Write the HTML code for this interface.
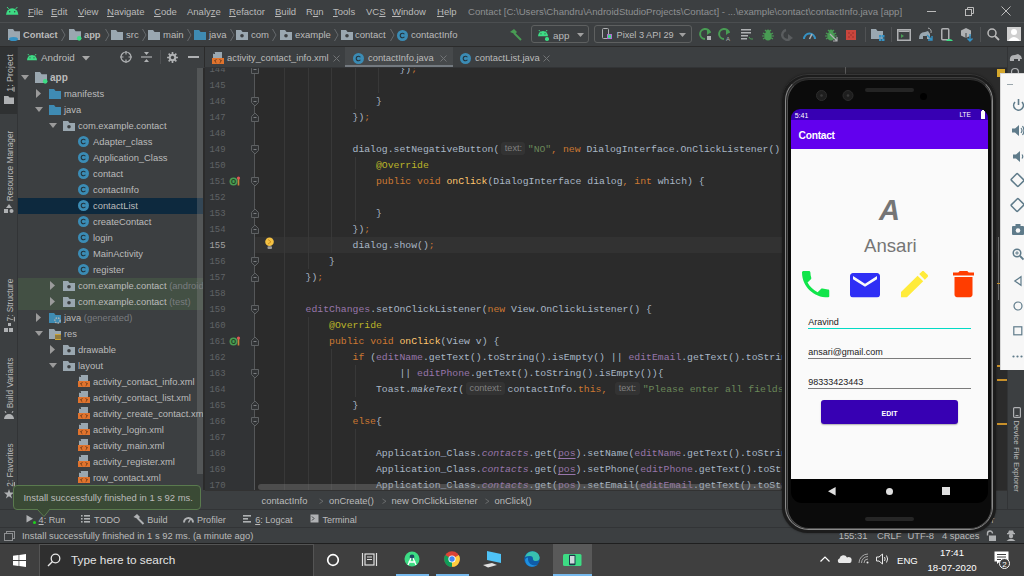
<!DOCTYPE html>
<html><head><meta charset="utf-8">
<style>
*{box-sizing:border-box}
html,body{margin:0;padding:0}
body{width:1024px;height:576px;overflow:hidden;position:relative;background:#3c3f41;font-family:"Liberation Sans",sans-serif;color:#bbbbbb;font-size:9.5px}
.a{position:absolute}
svg.a{overflow:visible}
.t{position:absolute;white-space:pre;line-height:1}
.m{position:absolute;white-space:pre;line-height:16px;font-family:"Liberation Mono",monospace;font-size:9.79px;color:#a9b7c6;height:16px}
u{text-decoration:underline;text-underline-offset:1px;text-decoration-thickness:1px}
</style></head><body>
<div class="a" style="left:0px;top:0px;width:1024px;height:22px;background:#3c3f41;"></div>
<div class="a" style="left:0px;top:22px;width:1024px;height:1px;background:#4b4e50;"></div>
<div class="a" style="left:0px;top:23px;width:1024px;height:23px;background:#3c3f41;"></div>
<div class="a" style="left:0px;top:46px;width:1024px;height:1px;background:#2b2b2b;"></div>
<svg class="a" style="left:6px;top:7.3px;" width="12.4" height="7.688" viewBox="0 0 12.4 7.688"><path d="M0 7.688 A6.2 6.448 0 0 1 12.4 7.688 Z" fill="#3ddc84"/><line x1="2.728" y1="1.922" x2="0.9920000000000001" y2="0" stroke="#3ddc84" stroke-width="1"/><line x1="9.672" y1="1.922" x2="11.408000000000001" y2="0" stroke="#3ddc84" stroke-width="1"/><circle cx="3.7199999999999998" cy="4.76656" r="0.744" fill="#3c3f41"/><circle cx="8.68" cy="4.76656" r="0.744" fill="#3c3f41"/></svg>
<div class="t" style="left:28.0px;top:7.4px;font-size:9.5px;color:#bbbbbb;"><u>F</u>ile</div>
<div class="t" style="left:51.0px;top:7.4px;font-size:9.5px;color:#bbbbbb;"><u>E</u>dit</div>
<div class="t" style="left:78.0px;top:7.4px;font-size:9.5px;color:#bbbbbb;"><u>V</u>iew</div>
<div class="t" style="left:107.0px;top:7.4px;font-size:9.5px;color:#bbbbbb;"><u>N</u>avigate</div>
<div class="t" style="left:154.0px;top:7.4px;font-size:9.5px;color:#bbbbbb;"><u>C</u>ode</div>
<div class="t" style="left:187.0px;top:7.4px;font-size:9.5px;color:#bbbbbb;">Analy<u>z</u>e</div>
<div class="t" style="left:229.0px;top:7.4px;font-size:9.5px;color:#bbbbbb;"><u>R</u>efactor</div>
<div class="t" style="left:275.0px;top:7.4px;font-size:9.5px;color:#bbbbbb;"><u>B</u>uild</div>
<div class="t" style="left:306.0px;top:7.4px;font-size:9.5px;color:#bbbbbb;">R<u>u</u>n</div>
<div class="t" style="left:333.0px;top:7.4px;font-size:9.5px;color:#bbbbbb;"><u>T</u>ools</div>
<div class="t" style="left:366.0px;top:7.4px;font-size:9.5px;color:#bbbbbb;">VC<u>S</u></div>
<div class="t" style="left:392.0px;top:7.4px;font-size:9.5px;color:#bbbbbb;"><u>W</u>indow</div>
<div class="t" style="left:437.0px;top:7.4px;font-size:9.5px;color:#bbbbbb;"><u>H</u>elp</div>
<div class="t" style="left:468.0px;top:7.3px;font-size:9.6px;color:#8e9092;">Contact [C:\Users\Chandru\AndroidStudioProjects\Contact] - ...\example\contact\contactInfo.java [app]</div>
<div class="a" style="left:927px;top:11px;width:9px;height:1px;background:#bbbbbb;"></div>
<svg class="a" style="left:965px;top:7px;" width="9" height="9" viewBox="0 0 9 9"><rect x="0.5" y="2.5" width="6" height="6" fill="none" stroke="#bbbbbb"/><path d="M2.5 2.5 V0.5 H8.5 V6.5 H6.5" fill="none" stroke="#bbbbbb"/></svg>
<svg class="a" style="left:1001px;top:6px;" width="10" height="10" viewBox="0 0 10 10"><path d="M0.5 0.5 L9.5 9.5 M9.5 0.5 L0.5 9.5" stroke="#bbbbbb" stroke-width="1"/></svg>
<svg class="a" style="left:8px;top:29px;" width="12" height="11" viewBox="0 0 12 11"><path d="M0 0 H5.04 L6.6000000000000005 2.2 H12 V11 H0 Z" fill="#9aa7b0"/></svg>
<svg class="a" style="left:9px;top:37px;" width="9" height="4" viewBox="0 0 9 4"><ellipse cx="4.5" cy="2" rx="4.5" ry="2" fill="#3592c4"/></svg>
<div class="t" style="left:23.0px;top:30.5px;font-size:9.3px;color:#bbbbbb;font-weight:bold;">Contact</div>
<svg class="a" style="left:61px;top:29px;" width="5" height="12" viewBox="0 0 5 12"><path d="M0.5 0 L4 6.0 L0.5 12" stroke="#6a6d70" stroke-width="0.9" fill="none"/></svg>
<svg class="a" style="left:69px;top:29px;" width="12" height="11" viewBox="0 0 12 11"><path d="M0 0 H5.04 L6.6000000000000005 2.2 H12 V11 H0 Z" fill="#9aa7b0"/><circle cx="10.2" cy="9.35" r="2.3" fill="#3ddc84"/></svg>
<div class="t" style="left:84.0px;top:30.5px;font-size:9.3px;color:#bbbbbb;font-weight:bold;">app</div>
<svg class="a" style="left:105px;top:29px;" width="5" height="12" viewBox="0 0 5 12"><path d="M0.5 0 L4 6.0 L0.5 12" stroke="#6a6d70" stroke-width="0.9" fill="none"/></svg>
<svg class="a" style="left:111px;top:30px;" width="12" height="10" viewBox="0 0 12 10"><path d="M0 0 H5.04 L6.6000000000000005 2.0 H12 V10 H0 Z" fill="#9aa7b0"/></svg>
<div class="t" style="left:126.0px;top:30.4px;font-size:9.5px;color:#bbbbbb;">src</div>
<svg class="a" style="left:142px;top:29px;" width="5" height="12" viewBox="0 0 5 12"><path d="M0.5 0 L4 6.0 L0.5 12" stroke="#6a6d70" stroke-width="0.9" fill="none"/></svg>
<svg class="a" style="left:148px;top:30px;" width="12" height="10" viewBox="0 0 12 10"><path d="M0 0 H5.04 L6.6000000000000005 2.0 H12 V10 H0 Z" fill="#9aa7b0"/></svg>
<div class="t" style="left:163.0px;top:30.4px;font-size:9.5px;color:#bbbbbb;">main</div>
<svg class="a" style="left:187px;top:29px;" width="5" height="12" viewBox="0 0 5 12"><path d="M0.5 0 L4 6.0 L0.5 12" stroke="#6a6d70" stroke-width="0.9" fill="none"/></svg>
<svg class="a" style="left:194px;top:30px;" width="12" height="10" viewBox="0 0 12 10"><path d="M0 0 H5.04 L6.6000000000000005 2.0 H12 V10 H0 Z" fill="#3f8bb3"/></svg>
<div class="t" style="left:209.0px;top:30.4px;font-size:9.5px;color:#bbbbbb;">java</div>
<svg class="a" style="left:230px;top:29px;" width="5" height="12" viewBox="0 0 5 12"><path d="M0.5 0 L4 6.0 L0.5 12" stroke="#6a6d70" stroke-width="0.9" fill="none"/></svg>
<svg class="a" style="left:236px;top:30px;" width="12" height="10" viewBox="0 0 12 10"><path d="M0 0 H5.04 L6.6000000000000005 2.0 H12 V10 H0 Z" fill="#9aa7b0"/><circle cx="6.0" cy="5.8" r="1.8" fill="#3c3f41"/></svg>
<div class="t" style="left:251.0px;top:30.4px;font-size:9.5px;color:#bbbbbb;">com</div>
<svg class="a" style="left:272px;top:29px;" width="5" height="12" viewBox="0 0 5 12"><path d="M0.5 0 L4 6.0 L0.5 12" stroke="#6a6d70" stroke-width="0.9" fill="none"/></svg>
<svg class="a" style="left:280px;top:30px;" width="12" height="10" viewBox="0 0 12 10"><path d="M0 0 H5.04 L6.6000000000000005 2.0 H12 V10 H0 Z" fill="#9aa7b0"/><circle cx="6.0" cy="5.8" r="1.8" fill="#3c3f41"/></svg>
<div class="t" style="left:295.0px;top:30.4px;font-size:9.5px;color:#bbbbbb;">example</div>
<svg class="a" style="left:334px;top:29px;" width="5" height="12" viewBox="0 0 5 12"><path d="M0.5 0 L4 6.0 L0.5 12" stroke="#6a6d70" stroke-width="0.9" fill="none"/></svg>
<svg class="a" style="left:341px;top:30px;" width="12" height="10" viewBox="0 0 12 10"><path d="M0 0 H5.04 L6.6000000000000005 2.0 H12 V10 H0 Z" fill="#9aa7b0"/><circle cx="6.0" cy="5.8" r="1.8" fill="#3c3f41"/></svg>
<div class="t" style="left:355.0px;top:30.4px;font-size:9.5px;color:#bbbbbb;">contact</div>
<svg class="a" style="left:390px;top:29px;" width="5" height="12" viewBox="0 0 5 12"><path d="M0.5 0 L4 6.0 L0.5 12" stroke="#6a6d70" stroke-width="0.9" fill="none"/></svg>
<svg class="a" style="left:397px;top:29.5px;" width="11" height="11" viewBox="0 0 11 11"><circle cx="5.5" cy="5.5" r="5.5" fill="#3b8cb5"/><path d="M7.4 4.2 A2.3 2.3 0 1 0 7.4 6.8" fill="none" stroke="#23323b" stroke-width="1.1"/></svg>
<div class="t" style="left:411.0px;top:30.4px;font-size:9.5px;color:#bbbbbb;">contactInfo</div>
<svg class="a" style="left:509px;top:29px;" width="13" height="12" viewBox="0 0 13 12"><path d="M1 3 L5 0 L8 3 L6 5 Z" fill="#499c54"/><path d="M5 4 L12 11" stroke="#499c54" stroke-width="2"/></svg>
<div class="a" style="left:531px;top:25px;width:58px;height:18px;border:1px solid #5e6060;border-radius:3px"></div>
<svg class="a" style="left:538px;top:30px;" width="10" height="6.2" viewBox="0 0 10 6.2"><path d="M0 6.2 A5.0 5.2 0 0 1 10 6.2 Z" fill="#3ddc84"/><line x1="2.2" y1="1.55" x2="0.8" y2="0" stroke="#3ddc84" stroke-width="1"/><line x1="7.800000000000001" y1="1.55" x2="9.200000000000001" y2="0" stroke="#3ddc84" stroke-width="1"/><circle cx="3.0" cy="3.844" r="0.6" fill="#3c3f41"/><circle cx="7.0" cy="3.844" r="0.6" fill="#3c3f41"/></svg>
<div class="a" style="left:545px;top:37px;width:3.5px;height:3.5px;background:#3ddc84;border-radius:50%"></div>
<div class="t" style="left:553.0px;top:31.0px;font-size:9.8px;color:#bbbbbb;">app</div>
<svg class="a" style="left:577px;top:33px;" width="7" height="4" viewBox="0 0 7 4"><path d="M0 0 H7 L3.5 4 Z" fill="#a0a0a0"/></svg>
<div class="a" style="left:594px;top:25px;width:98px;height:18px;border:1px solid #5e6060;border-radius:3px"></div>
<svg class="a" style="left:602px;top:28px;" width="10" height="12" viewBox="0 0 10 12"><rect x="0.5" y="0.5" width="6" height="10" rx="1" fill="none" stroke="#afb1b3"/><rect x="5" y="6" width="5" height="5" fill="#b06fd0"/><rect x="6" y="7" width="3" height="3" fill="#3ddc84"/></svg>
<div class="t" style="left:616.5px;top:31.3px;font-size:9.2px;color:#bbbbbb;">Pixel 3 API 29</div>
<svg class="a" style="left:679px;top:33px;" width="7" height="4" viewBox="0 0 7 4"><path d="M0 0 H7 L3.5 4 Z" fill="#a0a0a0"/></svg>
<svg class="a" style="left:699px;top:28px;" width="14" height="13" viewBox="0 0 14 13"><path d="M11 5 A5 5 0 1 0 6 11" fill="none" stroke="#499c54" stroke-width="2"/><path d="M8 1 L12 4 L8 7 Z" fill="#499c54"/><rect x="8" y="8" width="4" height="4" fill="#afb1b3"/></svg>
<svg class="a" style="left:718px;top:28px;" width="14" height="13" viewBox="0 0 14 13"><path d="M11 5 A5 5 0 1 0 6 11" fill="none" stroke="#499c54" stroke-width="2"/><path d="M8 1 L12 4 L8 7 Z" fill="#499c54"/><text x="8" y="12.5" font-size="6" fill="#afb1b3" font-family="Liberation Sans">A</text></svg>
<svg class="a" style="left:741px;top:29px;" width="13" height="12" viewBox="0 0 13 12"><rect x="0" y="0" width="10" height="1.5" fill="#afb1b3"/><rect x="0" y="3" width="10" height="1.5" fill="#afb1b3"/><rect x="0" y="6" width="7" height="1.5" fill="#afb1b3"/><rect x="0" y="9" width="6" height="1.5" fill="#afb1b3"/><path d="M8 8 Q9 11 12 10" stroke="#499c54" fill="none"/></svg>
<svg class="a" style="left:762px;top:29px;" width="12" height="12" viewBox="0 0 12 12"><ellipse cx="6" cy="7" rx="3.5" ry="4.5" fill="#499c54"/><path d="M1 4 L11 10 M11 4 L1 10 M0 7 H12 M3 1 L5 3 M9 1 L7 3" stroke="#499c54" stroke-width="1.2"/><circle cx="6" cy="2.5" r="2" fill="#499c54"/></svg>
<svg class="a" style="left:781px;top:29px;" width="13" height="13" viewBox="0 0 13 13"><path d="M5 1 A5 5 0 1 0 9 10" fill="none" stroke="#5a5d5f" stroke-width="2.4"/><path d="M7 5 L12 9 L7 12 Z" fill="#5a5d5f"/></svg>
<svg class="a" style="left:803px;top:29px;" width="13" height="11" viewBox="0 0 13 11"><path d="M1 10 A5.5 5.5 0 0 1 12 10" fill="none" stroke="#3592c4" stroke-width="2"/><path d="M6.5 10 L9 5" stroke="#afb1b3" stroke-width="1.5"/></svg>
<svg class="a" style="left:825px;top:29px;" width="12" height="12" viewBox="0 0 12 12"><ellipse cx="6" cy="7" rx="3.5" ry="4.5" fill="#499c54"/><path d="M1 4 L11 10 M11 4 L1 10 M0 7 H12 M3 1 L5 3 M9 1 L7 3" stroke="#499c54" stroke-width="1.2"/><circle cx="6" cy="2.5" r="2" fill="#499c54"/></svg>
<svg class="a" style="left:830px;top:34px;" width="8" height="8" viewBox="0 0 8 8"><path d="M0 0 L7 7 M7 3 V7 H3" stroke="#afb1b3" stroke-width="1.2" fill="none"/></svg>
<div class="a" style="left:846px;top:30px;width:10px;height:10px;background:#c9463d;"></div>
<svg class="a" style="left:847px;top:31px;" width="8" height="8" viewBox="0 0 8 8"><circle cx="2" cy="2" r=".7" fill="#8a2a24"/><circle cx="6" cy="2" r=".7" fill="#8a2a24"/><circle cx="4" cy="4" r=".7" fill="#8a2a24"/><circle cx="2" cy="6" r=".7" fill="#8a2a24"/><circle cx="6" cy="6" r=".7" fill="#8a2a24"/></svg>
<div class="a" style="left:865px;top:27px;width:1px;height:15px;background:#505254;"></div>
<svg class="a" style="left:871px;top:29px;" width="14" height="12" viewBox="0 0 14 12"><path d="M0 0 H5 L6.5 2 H12 V10 H0 Z" fill="#9aa7b0"/><rect x="8" y="6" width="2.5" height="2.5" fill="#3592c4"/><rect x="11" y="6" width="2.5" height="2.5" fill="#3592c4"/><rect x="8" y="9.5" width="2.5" height="2.5" fill="#3592c4"/><rect x="11" y="9.5" width="2.5" height="2.5" fill="#3592c4"/></svg>
<div class="a" style="left:891px;top:27px;width:1px;height:15px;background:#505254;"></div>
<svg class="a" style="left:897px;top:29px;" width="14" height="12" viewBox="0 0 14 12"><rect x="0.75" y="0.75" width="12.5" height="10.5" fill="none" stroke="#afb1b3" stroke-width="1.5"/><rect x="1.5" y="1.5" width="11" height="1.5" fill="#afb1b3"/><path d="M4 5 L7 7 L4 9 Z" fill="#499c54"/></svg>
<svg class="a" style="left:918px;top:28px;" width="15" height="13" viewBox="0 0 15 13"><path d="M1 11 Q1 4 7 4 L10 3 L12 6 V11 H9 V8 H5 V11 Z" fill="#9aa7b0"/><path d="M9 7 L14 12 M14 8 V12 H10" stroke="#3592c4" stroke-width="1.4" fill="none"/><path d="M10 0 Q14 1 13 5" stroke="#afb1b3" fill="none"/></svg>
<svg class="a" style="left:941px;top:28px;" width="12" height="14" viewBox="0 0 12 14"><rect x="0.75" y="0.75" width="7" height="11" rx="1" fill="none" stroke="#afb1b3" stroke-width="1.5"/><path d="M5 13 A4 4 0 0 1 12 13 Z" fill="#3ddc84"/></svg>
<svg class="a" style="left:961px;top:28px;" width="12" height="14" viewBox="0 0 12 14"><path d="M5 0 L10 2.5 V7.5 L5 10 L0 7.5 V2.5 Z" fill="#afb1b3"/><path d="M5 5 V10" stroke="#3c3f41"/><path d="M9 6 V13 M6.5 10.5 L9 13 L11.5 10.5" stroke="#3592c4" stroke-width="1.4" fill="none"/></svg>
<div class="a" style="left:980px;top:27px;width:1px;height:15px;background:#505254;"></div>
<svg class="a" style="left:987px;top:28px;" width="13" height="13" viewBox="0 0 13 13"><circle cx="5" cy="5" r="4" fill="none" stroke="#bbbbbb" stroke-width="1.5"/><path d="M8 8 L12 12" stroke="#bbbbbb" stroke-width="1.8"/></svg>
<svg class="a" style="left:1007px;top:27px;" width="14" height="14" viewBox="0 0 14 14"><rect x="0" y="0" width="14" height="14" fill="#cfcfcf"/><circle cx="7" cy="5" r="3" fill="#ffffff"/><path d="M1 14 Q7 6 13 14 Z" fill="#ffffff"/></svg>
<div class="a" style="left:0px;top:47px;width:17px;height:462px;background:#3c3f41;"></div>
<div class="a" style="left:0px;top:47px;width:17px;height:67px;background:#2f3132;"></div>
<div class="a" style="left:17px;top:47px;width:1px;height:462px;background:#323436;"></div>
<div class="t" style="left:10px;top:73.35px;font-size:8.9px;color:#bbbbbb;transform:translate(-50%,-50%) rotate(-90deg);"><u>1</u>: Project</div>
<svg class="a" style="left:4px;top:96px;" width="10" height="8" viewBox="0 0 10 8"><path d="M0 0 H4.2 L5.5 1.6 H10 V8 H0 Z" fill="#afb1b3"/></svg>
<div class="t" style="left:10px;top:165.5px;font-size:8.3px;color:#bbbbbb;transform:translate(-50%,-50%) rotate(-90deg);">Resource Manager</div>
<svg class="a" style="left:4px;top:204px;" width="10" height="9" viewBox="0 0 10 9"><path d="M5 0 L8 4 H2 Z" fill="#afb1b3"/><rect x="0" y="5" width="4" height="4" fill="#afb1b3"/><circle cx="7.5" cy="7" r="2" fill="#afb1b3"/></svg>
<div class="t" style="left:10px;top:299.85px;font-size:8.3px;color:#bbbbbb;transform:translate(-50%,-50%) rotate(-90deg);"><u>7</u>: Structure</div>
<svg class="a" style="left:4px;top:323px;" width="10" height="10" viewBox="0 0 10 10"><rect x="4" y="0" width="3" height="3" fill="#afb1b3"/><rect x="0" y="5" width="4" height="4" fill="#afb1b3"/><rect x="5" y="5" width="4" height="4" fill="#afb1b3"/></svg>
<div class="t" style="left:10px;top:382.8px;font-size:8.3px;color:#bbbbbb;transform:translate(-50%,-50%) rotate(-90deg);">Build Variants</div>
<svg class="a" style="left:4px;top:410px;" width="10" height="9" viewBox="0 0 10 9"><path d="M0 9 A5 5 0 0 1 10 9 Z" fill="#afb1b3"/><path d="M2 3 L1 1 M8 3 L9 1" stroke="#afb1b3"/></svg>
<div class="t" style="left:10px;top:464.85px;font-size:8.3px;color:#bbbbbb;transform:translate(-50%,-50%) rotate(-90deg);"><u>2</u>: Favorites</div>
<svg class="a" style="left:4px;top:489px;" width="10" height="10" viewBox="0 0 10 10"><path d="M5 0 L6.2 3.6 H10 L7 5.9 L8.1 9.6 L5 7.3 L1.9 9.6 L3 5.9 L0 3.6 H3.8 Z" fill="#afb1b3"/></svg>
<div class="a" style="left:18px;top:47px;width:186px;height:20px;background:#3c3f41;"></div>
<svg class="a" style="left:27px;top:53.5px;" width="10" height="6.2" viewBox="0 0 10 6.2"><path d="M0 6.2 A5.0 5.2 0 0 1 10 6.2 Z" fill="#3ddc84"/><line x1="2.2" y1="1.55" x2="0.8" y2="0" stroke="#3ddc84" stroke-width="1"/><line x1="7.800000000000001" y1="1.55" x2="9.200000000000001" y2="0" stroke="#3ddc84" stroke-width="1"/><circle cx="3.0" cy="3.844" r="0.6" fill="#3c3f41"/><circle cx="7.0" cy="3.844" r="0.6" fill="#3c3f41"/></svg>
<div class="t" style="left:41.0px;top:52.7px;font-size:9.8px;color:#bbbbbb;">Android</div>
<svg class="a" style="left:82px;top:56px;" width="8" height="4.5" viewBox="0 0 8 4.5"><path d="M0 0 H8 L4.0 4.5 Z" fill="#a8a8a8"/></svg>
<svg class="a" style="left:120px;top:51px;" width="12" height="12" viewBox="0 0 12 12"><circle cx="6" cy="6" r="5" fill="none" stroke="#afb1b3" stroke-width="1.2"/><path d="M6 0 V3.5 M6 8.5 V12 M0 6 H3.5 M8.5 6 H12" stroke="#afb1b3" stroke-width="1.2"/></svg>
<svg class="a" style="left:141px;top:51px;" width="11" height="12" viewBox="0 0 11 12"><path d="M0 6 H11" stroke="#afb1b3" stroke-width="1.2"/><path d="M3 1 H8 L5.5 4 Z M3 11 H8 L5.5 8 Z" fill="#afb1b3"/></svg>
<div class="a" style="left:160px;top:50px;width:1px;height:14px;background:#4e5052;"></div>
<svg class="a" style="left:167px;top:52px;" width="11" height="11" viewBox="0 0 11 11"><path d="M9.31 4.66 L10.94 4.67 L10.94 6.33 L9.31 6.34 L8.78 7.60 L9.93 8.76 L8.76 9.93 L7.60 8.78 L6.34 9.31 L6.33 10.94 L4.67 10.94 L4.66 9.31 L3.40 8.78 L2.24 9.93 L1.07 8.76 L2.22 7.60 L1.69 6.34 L0.06 6.33 L0.06 4.67 L1.69 4.66 L2.22 3.40 L1.07 2.24 L2.24 1.07 L3.40 2.22 L4.66 1.69 L4.67 0.06 L6.33 0.06 L6.34 1.69 L7.60 2.22 L8.76 1.07 L9.93 2.24 L8.78 3.40 Z" fill="#afb1b3"/><circle cx="5.5" cy="5.5" r="1.7" fill="#3c3f41"/></svg>
<div class="a" style="left:188px;top:56px;width:11px;height:2px;background:#afb1b3;"></div>
<div class="a" style="left:18px;top:198px;width:185px;height:16px;background:#0d293e;"></div>
<div class="a" style="left:18px;top:278px;width:185px;height:16px;background:#435044;"></div>
<div class="a" style="left:18px;top:294px;width:185px;height:16px;background:#435044;"></div>
<div class="a" style="left:197px;top:68px;width:6px;height:406px;background:rgba(140,140,140,0.3);"></div>
<svg class="a" style="left:20.5px;top:74.9px;" width="8" height="5" viewBox="0 0 8 5"><path d="M0 0 H8 L4.0 5 Z" fill="#9b9b9b"/></svg>
<svg class="a" style="left:35px;top:71.9px;" width="12" height="11" viewBox="0 0 12 11"><path d="M0 0 H5.04 L6.6000000000000005 2.2 H12 V11 H0 Z" fill="#9aa7b0"/><circle cx="10.2" cy="9.35" r="2.3" fill="#3ddc84"/></svg>
<div class="t" style="left:50.0px;top:73.0px;font-size:10px;color:#bbbbbb;font-weight:bold;">app</div>
<svg class="a" style="left:36.0px;top:89.4px;" width="5" height="9" viewBox="0 0 5 9"><path d="M0 0 L5 4.5 L0 9 Z" fill="#9b9b9b"/></svg>
<svg class="a" style="left:49px;top:88.9px;" width="12" height="10" viewBox="0 0 12 10"><path d="M0 0 H5.04 L6.6000000000000005 2.0 H12 V10 H0 Z" fill="#3f8bb3"/></svg>
<div class="t" style="left:64.0px;top:89.3px;font-size:9.4px;color:#bbbbbb;">manifests</div>
<svg class="a" style="left:34.5px;top:106.9px;" width="8" height="5" viewBox="0 0 8 5"><path d="M0 0 H8 L4.0 5 Z" fill="#9b9b9b"/></svg>
<svg class="a" style="left:49px;top:104.9px;" width="12" height="10" viewBox="0 0 12 10"><path d="M0 0 H5.04 L6.6000000000000005 2.0 H12 V10 H0 Z" fill="#3f8bb3"/></svg>
<div class="t" style="left:64.0px;top:105.3px;font-size:9.4px;color:#bbbbbb;">java</div>
<svg class="a" style="left:48.5px;top:122.9px;" width="8" height="5" viewBox="0 0 8 5"><path d="M0 0 H8 L4.0 5 Z" fill="#9b9b9b"/></svg>
<svg class="a" style="left:63px;top:120.9px;" width="12" height="10" viewBox="0 0 12 10"><path d="M0 0 H5.04 L6.6000000000000005 2.0 H12 V10 H0 Z" fill="#9aa7b0"/><circle cx="6.0" cy="5.8" r="1.8" fill="#3c3f41"/></svg>
<div class="t" style="left:78.0px;top:121.3px;font-size:9.4px;color:#bbbbbb;">com.example.contact</div>
<svg class="a" style="left:78.2px;top:135.70000000000002px;" width="11" height="11" viewBox="0 0 11 11"><circle cx="5.5" cy="5.5" r="5.5" fill="#3b8cb5"/><path d="M7.4 4.2 A2.3 2.3 0 1 0 7.4 6.8" fill="none" stroke="#23323b" stroke-width="1.1"/></svg>
<div class="t" style="left:93.0px;top:137.3px;font-size:9.4px;color:#bbbbbb;">Adapter_class</div>
<svg class="a" style="left:78.2px;top:151.70000000000002px;" width="11" height="11" viewBox="0 0 11 11"><circle cx="5.5" cy="5.5" r="5.5" fill="#3b8cb5"/><path d="M7.4 4.2 A2.3 2.3 0 1 0 7.4 6.8" fill="none" stroke="#23323b" stroke-width="1.1"/></svg>
<div class="t" style="left:93.0px;top:153.3px;font-size:9.4px;color:#bbbbbb;">Application_Class</div>
<svg class="a" style="left:78.2px;top:167.70000000000002px;" width="11" height="11" viewBox="0 0 11 11"><circle cx="5.5" cy="5.5" r="5.5" fill="#3b8cb5"/><path d="M7.4 4.2 A2.3 2.3 0 1 0 7.4 6.8" fill="none" stroke="#23323b" stroke-width="1.1"/></svg>
<div class="t" style="left:93.0px;top:169.3px;font-size:9.4px;color:#bbbbbb;">contact</div>
<svg class="a" style="left:78.2px;top:183.70000000000002px;" width="11" height="11" viewBox="0 0 11 11"><circle cx="5.5" cy="5.5" r="5.5" fill="#3b8cb5"/><path d="M7.4 4.2 A2.3 2.3 0 1 0 7.4 6.8" fill="none" stroke="#23323b" stroke-width="1.1"/></svg>
<div class="t" style="left:93.0px;top:185.3px;font-size:9.4px;color:#bbbbbb;">contactInfo</div>
<svg class="a" style="left:78.2px;top:199.70000000000002px;" width="11" height="11" viewBox="0 0 11 11"><circle cx="5.5" cy="5.5" r="5.5" fill="#3b8cb5"/><path d="M7.4 4.2 A2.3 2.3 0 1 0 7.4 6.8" fill="none" stroke="#23323b" stroke-width="1.1"/></svg>
<div class="t" style="left:93.0px;top:201.3px;font-size:9.4px;color:#bbbbbb;">contactList</div>
<svg class="a" style="left:78.2px;top:215.70000000000002px;" width="11" height="11" viewBox="0 0 11 11"><circle cx="5.5" cy="5.5" r="5.5" fill="#3b8cb5"/><path d="M7.4 4.2 A2.3 2.3 0 1 0 7.4 6.8" fill="none" stroke="#23323b" stroke-width="1.1"/></svg>
<div class="t" style="left:93.0px;top:217.3px;font-size:9.4px;color:#bbbbbb;">createContact</div>
<svg class="a" style="left:78.2px;top:231.70000000000002px;" width="11" height="11" viewBox="0 0 11 11"><circle cx="5.5" cy="5.5" r="5.5" fill="#3b8cb5"/><path d="M7.4 4.2 A2.3 2.3 0 1 0 7.4 6.8" fill="none" stroke="#23323b" stroke-width="1.1"/></svg>
<div class="t" style="left:93.0px;top:233.3px;font-size:9.4px;color:#bbbbbb;">login</div>
<svg class="a" style="left:78.2px;top:247.70000000000002px;" width="11" height="11" viewBox="0 0 11 11"><circle cx="5.5" cy="5.5" r="5.5" fill="#3b8cb5"/><path d="M7.4 4.2 A2.3 2.3 0 1 0 7.4 6.8" fill="none" stroke="#23323b" stroke-width="1.1"/></svg>
<div class="t" style="left:93.0px;top:249.3px;font-size:9.4px;color:#bbbbbb;">MainActivity</div>
<svg class="a" style="left:78.2px;top:263.7px;" width="11" height="11" viewBox="0 0 11 11"><circle cx="5.5" cy="5.5" r="5.5" fill="#3b8cb5"/><path d="M7.4 4.2 A2.3 2.3 0 1 0 7.4 6.8" fill="none" stroke="#23323b" stroke-width="1.1"/></svg>
<div class="t" style="left:93.0px;top:265.3px;font-size:9.4px;color:#bbbbbb;">register</div>
<svg class="a" style="left:50.0px;top:281.4px;" width="5" height="9" viewBox="0 0 5 9"><path d="M0 0 L5 4.5 L0 9 Z" fill="#9b9b9b"/></svg>
<svg class="a" style="left:63px;top:280.9px;" width="12" height="10" viewBox="0 0 12 10"><path d="M0 0 H5.04 L6.6000000000000005 2.0 H12 V10 H0 Z" fill="#9aa7b0"/><circle cx="6.0" cy="5.8" r="1.8" fill="#3c3f41"/></svg>
<div class="t" style="left:78.0px;top:281.3px;font-size:9.4px;color:#bbbbbb;">com.example.contact<span style="color:#7a7d80"> (androidTest)</span></div>
<svg class="a" style="left:50.0px;top:297.4px;" width="5" height="9" viewBox="0 0 5 9"><path d="M0 0 L5 4.5 L0 9 Z" fill="#9b9b9b"/></svg>
<svg class="a" style="left:63px;top:296.9px;" width="12" height="10" viewBox="0 0 12 10"><path d="M0 0 H5.04 L6.6000000000000005 2.0 H12 V10 H0 Z" fill="#9aa7b0"/><circle cx="6.0" cy="5.8" r="1.8" fill="#3c3f41"/></svg>
<div class="t" style="left:78.0px;top:297.3px;font-size:9.4px;color:#bbbbbb;">com.example.contact<span style="color:#7a7d80"> (test)</span></div>
<svg class="a" style="left:36.0px;top:313.4px;" width="5" height="9" viewBox="0 0 5 9"><path d="M0 0 L5 4.5 L0 9 Z" fill="#9b9b9b"/></svg>
<svg class="a" style="left:49px;top:312.9px;" width="12" height="10" viewBox="0 0 12 10"><path d="M0 0 H5.04 L6.6000000000000005 2.0 H12 V10 H0 Z" fill="#3f8bb3"/></svg>
<svg class="a" style="left:54px;top:316.9px;" width="7" height="7" viewBox="0 0 7 7"><circle cx="3.5" cy="3.5" r="2.6" fill="none" stroke="#afb1b3" stroke-width="1.4" stroke-dasharray="1.5 1"/></svg>
<div class="t" style="left:64.0px;top:313.3px;font-size:9.4px;color:#bbbbbb;">java<span style="color:#7a7d80"> (generated)</span></div>
<svg class="a" style="left:34.5px;top:330.9px;" width="8" height="5" viewBox="0 0 8 5"><path d="M0 0 H8 L4.0 5 Z" fill="#9b9b9b"/></svg>
<svg class="a" style="left:49px;top:328.9px;" width="12" height="10" viewBox="0 0 12 10"><path d="M0 0 H5.04 L6.6000000000000005 2.0 H12 V10 H0 Z" fill="#9aa7b0"/></svg>
<svg class="a" style="left:55px;top:333.9px;" width="6" height="6" viewBox="0 0 6 6"><rect width="6" height="6" fill="#c9a23a"/><path d="M0 2 H6 M0 4 H6" stroke="#3c3f41" stroke-width=".8"/></svg>
<div class="t" style="left:64.0px;top:329.3px;font-size:9.4px;color:#bbbbbb;">res</div>
<svg class="a" style="left:50.0px;top:345.4px;" width="5" height="9" viewBox="0 0 5 9"><path d="M0 0 L5 4.5 L0 9 Z" fill="#9b9b9b"/></svg>
<svg class="a" style="left:63px;top:344.9px;" width="12" height="10" viewBox="0 0 12 10"><path d="M0 0 H5.04 L6.6000000000000005 2.0 H12 V10 H0 Z" fill="#9aa7b0"/><circle cx="6.0" cy="5.8" r="1.8" fill="#3c3f41"/></svg>
<div class="t" style="left:78.0px;top:345.3px;font-size:9.4px;color:#bbbbbb;">drawable</div>
<svg class="a" style="left:48.5px;top:362.9px;" width="8" height="5" viewBox="0 0 8 5"><path d="M0 0 H8 L4.0 5 Z" fill="#9b9b9b"/></svg>
<svg class="a" style="left:63px;top:360.9px;" width="12" height="10" viewBox="0 0 12 10"><path d="M0 0 H5.04 L6.6000000000000005 2.0 H12 V10 H0 Z" fill="#9aa7b0"/><circle cx="6.0" cy="5.8" r="1.8" fill="#3c3f41"/></svg>
<div class="t" style="left:78.0px;top:361.3px;font-size:9.4px;color:#bbbbbb;">layout</div>
<svg class="a" style="left:78.3px;top:375.4px;" width="12" height="12" viewBox="0 0 12 12"><path d="M3 0 H10 V6 H1 V2 Z" fill="#9aa7b0"/><path d="M3 0 V2 H1" fill="#3c3f41"/><rect x="0" y="6" width="12" height="6" fill="#e0732d"/><path d="M4.3 7.3 L2.6 9 L4.3 10.7 M7.7 7.3 L9.4 9 L7.7 10.7" stroke="#4a2a14" stroke-width="0.9" fill="none"/></svg>
<div class="t" style="left:93.0px;top:377.3px;font-size:9.4px;color:#bbbbbb;">activity_contact_info.xml</div>
<svg class="a" style="left:78.3px;top:391.4px;" width="12" height="12" viewBox="0 0 12 12"><path d="M3 0 H10 V6 H1 V2 Z" fill="#9aa7b0"/><path d="M3 0 V2 H1" fill="#3c3f41"/><rect x="0" y="6" width="12" height="6" fill="#e0732d"/><path d="M4.3 7.3 L2.6 9 L4.3 10.7 M7.7 7.3 L9.4 9 L7.7 10.7" stroke="#4a2a14" stroke-width="0.9" fill="none"/></svg>
<div class="t" style="left:93.0px;top:393.3px;font-size:9.4px;color:#bbbbbb;">activity_contact_list.xml</div>
<svg class="a" style="left:78.3px;top:407.4px;" width="12" height="12" viewBox="0 0 12 12"><path d="M3 0 H10 V6 H1 V2 Z" fill="#9aa7b0"/><path d="M3 0 V2 H1" fill="#3c3f41"/><rect x="0" y="6" width="12" height="6" fill="#e0732d"/><path d="M4.3 7.3 L2.6 9 L4.3 10.7 M7.7 7.3 L9.4 9 L7.7 10.7" stroke="#4a2a14" stroke-width="0.9" fill="none"/></svg>
<div class="t" style="left:93.0px;top:409.3px;font-size:9.4px;color:#bbbbbb;">activity_create_contact.xml</div>
<svg class="a" style="left:78.3px;top:423.4px;" width="12" height="12" viewBox="0 0 12 12"><path d="M3 0 H10 V6 H1 V2 Z" fill="#9aa7b0"/><path d="M3 0 V2 H1" fill="#3c3f41"/><rect x="0" y="6" width="12" height="6" fill="#e0732d"/><path d="M4.3 7.3 L2.6 9 L4.3 10.7 M7.7 7.3 L9.4 9 L7.7 10.7" stroke="#4a2a14" stroke-width="0.9" fill="none"/></svg>
<div class="t" style="left:93.0px;top:425.3px;font-size:9.4px;color:#bbbbbb;">activity_login.xml</div>
<svg class="a" style="left:78.3px;top:439.4px;" width="12" height="12" viewBox="0 0 12 12"><path d="M3 0 H10 V6 H1 V2 Z" fill="#9aa7b0"/><path d="M3 0 V2 H1" fill="#3c3f41"/><rect x="0" y="6" width="12" height="6" fill="#e0732d"/><path d="M4.3 7.3 L2.6 9 L4.3 10.7 M7.7 7.3 L9.4 9 L7.7 10.7" stroke="#4a2a14" stroke-width="0.9" fill="none"/></svg>
<div class="t" style="left:93.0px;top:441.3px;font-size:9.4px;color:#bbbbbb;">activity_main.xml</div>
<svg class="a" style="left:78.3px;top:455.4px;" width="12" height="12" viewBox="0 0 12 12"><path d="M3 0 H10 V6 H1 V2 Z" fill="#9aa7b0"/><path d="M3 0 V2 H1" fill="#3c3f41"/><rect x="0" y="6" width="12" height="6" fill="#e0732d"/><path d="M4.3 7.3 L2.6 9 L4.3 10.7 M7.7 7.3 L9.4 9 L7.7 10.7" stroke="#4a2a14" stroke-width="0.9" fill="none"/></svg>
<div class="t" style="left:93.0px;top:457.3px;font-size:9.4px;color:#bbbbbb;">activity_register.xml</div>
<svg class="a" style="left:78.3px;top:471.4px;" width="12" height="12" viewBox="0 0 12 12"><path d="M3 0 H10 V6 H1 V2 Z" fill="#9aa7b0"/><path d="M3 0 V2 H1" fill="#3c3f41"/><rect x="0" y="6" width="12" height="6" fill="#e0732d"/><path d="M4.3 7.3 L2.6 9 L4.3 10.7 M7.7 7.3 L9.4 9 L7.7 10.7" stroke="#4a2a14" stroke-width="0.9" fill="none"/></svg>
<div class="t" style="left:93.0px;top:473.3px;font-size:9.4px;color:#bbbbbb;">row_contact.xml</div>
<div class="a" style="left:204px;top:47px;width:803px;height:20px;background:#3c3f41;"></div>
<div class="a" style="left:204px;top:47px;width:1px;height:443px;background:#2b2b2b;"></div>
<svg class="a" style="left:212px;top:52px;" width="12" height="12" viewBox="0 0 12 12"><path d="M3 0 H10 V6 H1 V2 Z" fill="#9aa7b0"/><path d="M3 0 V2 H1" fill="#3c3f41"/><rect x="0" y="6" width="12" height="6" fill="#e0732d"/><path d="M4.3 7.3 L2.6 9 L4.3 10.7 M7.7 7.3 L9.4 9 L7.7 10.7" stroke="#4a2a14" stroke-width="0.9" fill="none"/></svg>
<div class="t" style="left:227.0px;top:53.4px;font-size:9.4px;color:#bbbbbb;">activity_contact_info.xml</div>
<svg class="a" style="left:333.0px;top:54.5px;" width="7" height="7" viewBox="0 0 7 7"><path d="M0.5 0.5 L6.5 6.5 M6.5 0.5 L0.5 6.5" stroke="#717375" stroke-width="1"/></svg>
<div class="a" style="left:345px;top:47px;width:108px;height:21px;background:#46494b;"></div>
<div class="a" style="left:345px;top:65.3px;width:108px;height:2.7px;background:#747a80;"></div>
<svg class="a" style="left:353px;top:52.5px;" width="11" height="11" viewBox="0 0 11 11"><circle cx="5.5" cy="5.5" r="5.5" fill="#3b8cb5"/><path d="M7.4 4.2 A2.3 2.3 0 1 0 7.4 6.8" fill="none" stroke="#23323b" stroke-width="1.1"/></svg>
<div class="t" style="left:368.0px;top:53.4px;font-size:9.4px;color:#bbbbbb;">contactInfo.java</div>
<svg class="a" style="left:439.5px;top:54.5px;" width="7" height="7" viewBox="0 0 7 7"><path d="M0.5 0.5 L6.5 6.5 M6.5 0.5 L0.5 6.5" stroke="#717375" stroke-width="1"/></svg>
<svg class="a" style="left:459.5px;top:52.5px;" width="11" height="11" viewBox="0 0 11 11"><circle cx="5.5" cy="5.5" r="5.5" fill="#3b8cb5"/><path d="M7.4 4.2 A2.3 2.3 0 1 0 7.4 6.8" fill="none" stroke="#23323b" stroke-width="1.1"/></svg>
<div class="t" style="left:475.0px;top:53.4px;font-size:9.4px;color:#bbbbbb;">contactList.java</div>
<svg class="a" style="left:543.3px;top:54.5px;" width="7" height="7" viewBox="0 0 7 7"><path d="M0.5 0.5 L6.5 6.5 M6.5 0.5 L0.5 6.5" stroke="#717375" stroke-width="1"/></svg>
<div class="a" style="left:204px;top:67px;width:803px;height:1px;background:#323436;"></div>
<div class="a" style="left:0;top:68px;width:1007px;height:422px;overflow:hidden">
<div class="a" style="left:203px;top:-21px;width:2px;height:443px;background:#2b2b2b;"></div>
<div class="a" style="left:205px;top:-1px;width:49px;height:423px;background:#313335;"></div>
<div class="a" style="left:254px;top:-1px;width:743px;height:423px;background:#2b2b2b;"></div>
<div class="a" style="left:254px;top:168.6px;width:743px;height:16px;background:#323232;"></div>
<div class="m" style="left:195.5px;width:30px;text-align:right;top:-6.4px;color:#606366;font-size:8.9px">144</div>
<div class="m" style="left:195.5px;width:30px;text-align:right;top:9.6px;color:#606366;font-size:8.9px">145</div>
<div class="m" style="left:195.5px;width:30px;text-align:right;top:25.6px;color:#606366;font-size:8.9px">146</div>
<div class="m" style="left:195.5px;width:30px;text-align:right;top:41.6px;color:#606366;font-size:8.9px">147</div>
<div class="m" style="left:195.5px;width:30px;text-align:right;top:57.6px;color:#606366;font-size:8.9px">148</div>
<div class="m" style="left:195.5px;width:30px;text-align:right;top:73.6px;color:#606366;font-size:8.9px">149</div>
<div class="m" style="left:195.5px;width:30px;text-align:right;top:89.6px;color:#606366;font-size:8.9px">150</div>
<div class="m" style="left:195.5px;width:30px;text-align:right;top:105.6px;color:#606366;font-size:8.9px">151</div>
<div class="m" style="left:195.5px;width:30px;text-align:right;top:121.6px;color:#606366;font-size:8.9px">152</div>
<div class="m" style="left:195.5px;width:30px;text-align:right;top:137.6px;color:#606366;font-size:8.9px">153</div>
<div class="m" style="left:195.5px;width:30px;text-align:right;top:153.6px;color:#606366;font-size:8.9px">154</div>
<div class="m" style="left:195.5px;width:30px;text-align:right;top:169.6px;color:#a4a3a3;font-size:8.9px">155</div>
<div class="m" style="left:195.5px;width:30px;text-align:right;top:185.6px;color:#606366;font-size:8.9px">156</div>
<div class="m" style="left:195.5px;width:30px;text-align:right;top:201.6px;color:#606366;font-size:8.9px">157</div>
<div class="m" style="left:195.5px;width:30px;text-align:right;top:217.6px;color:#606366;font-size:8.9px">158</div>
<div class="m" style="left:195.5px;width:30px;text-align:right;top:233.6px;color:#606366;font-size:8.9px">159</div>
<div class="m" style="left:195.5px;width:30px;text-align:right;top:249.6px;color:#606366;font-size:8.9px">160</div>
<div class="m" style="left:195.5px;width:30px;text-align:right;top:265.6px;color:#606366;font-size:8.9px">161</div>
<div class="m" style="left:195.5px;width:30px;text-align:right;top:281.6px;color:#606366;font-size:8.9px">162</div>
<div class="m" style="left:195.5px;width:30px;text-align:right;top:297.6px;color:#606366;font-size:8.9px">163</div>
<div class="m" style="left:195.5px;width:30px;text-align:right;top:313.6px;color:#606366;font-size:8.9px">164</div>
<div class="m" style="left:195.5px;width:30px;text-align:right;top:329.6px;color:#606366;font-size:8.9px">165</div>
<div class="m" style="left:195.5px;width:30px;text-align:right;top:345.6px;color:#606366;font-size:8.9px">166</div>
<div class="m" style="left:195.5px;width:30px;text-align:right;top:361.6px;color:#606366;font-size:8.9px">167</div>
<div class="m" style="left:195.5px;width:30px;text-align:right;top:377.6px;color:#606366;font-size:8.9px">168</div>
<div class="m" style="left:195.5px;width:30px;text-align:right;top:393.6px;color:#606366;font-size:8.9px">169</div>
<div class="m" style="left:195.5px;width:30px;text-align:right;top:409.6px;color:#606366;font-size:8.9px">170</div>
<div class="a" style="left:254px;top:-1px;width:1px;height:423px;background:#555759;"></div>
<svg class="a" style="left:250.5px;top:-3.4000000000000057px;" width="8" height="9" viewBox="0 0 8 9"><path d="M0.5 8.5 H7.5 V3.5 L4 0 L0.5 3.5 Z" fill="#313335" stroke="#5e6163" stroke-width="1"/><path d="M2.5 4.5 H5.5" stroke="#7a7d80" stroke-width="1"/></svg>
<svg class="a" style="left:250.5px;top:28.599999999999994px;" width="8" height="9" viewBox="0 0 8 9"><path d="M0.5 0.5 H7.5 V5.5 L4 9 L0.5 5.5 Z" fill="#313335" stroke="#5e6163" stroke-width="1"/><path d="M2.5 4.5 H5.5" stroke="#7a7d80" stroke-width="1"/></svg>
<svg class="a" style="left:250.5px;top:44.599999999999994px;" width="8" height="9" viewBox="0 0 8 9"><path d="M0.5 8.5 H7.5 V3.5 L4 0 L0.5 3.5 Z" fill="#313335" stroke="#5e6163" stroke-width="1"/><path d="M2.5 4.5 H5.5" stroke="#7a7d80" stroke-width="1"/></svg>
<svg class="a" style="left:250.5px;top:76.6px;" width="8" height="9" viewBox="0 0 8 9"><path d="M0.5 0.5 H7.5 V5.5 L4 9 L0.5 5.5 Z" fill="#313335" stroke="#5e6163" stroke-width="1"/><path d="M2.5 4.5 H5.5" stroke="#7a7d80" stroke-width="1"/></svg>
<svg class="a" style="left:250.5px;top:108.6px;" width="8" height="9" viewBox="0 0 8 9"><path d="M0.5 0.5 H7.5 V5.5 L4 9 L0.5 5.5 Z" fill="#313335" stroke="#5e6163" stroke-width="1"/><path d="M2.5 4.5 H5.5" stroke="#7a7d80" stroke-width="1"/></svg>
<svg class="a" style="left:250.5px;top:140.6px;" width="8" height="9" viewBox="0 0 8 9"><path d="M0.5 8.5 H7.5 V3.5 L4 0 L0.5 3.5 Z" fill="#313335" stroke="#5e6163" stroke-width="1"/><path d="M2.5 4.5 H5.5" stroke="#7a7d80" stroke-width="1"/></svg>
<svg class="a" style="left:250.5px;top:156.6px;" width="8" height="9" viewBox="0 0 8 9"><path d="M0.5 8.5 H7.5 V3.5 L4 0 L0.5 3.5 Z" fill="#313335" stroke="#5e6163" stroke-width="1"/><path d="M2.5 4.5 H5.5" stroke="#7a7d80" stroke-width="1"/></svg>
<svg class="a" style="left:250.5px;top:188.60000000000002px;" width="8" height="9" viewBox="0 0 8 9"><path d="M0.5 0.5 H7.5 V5.5 L4 9 L0.5 5.5 Z" fill="#313335" stroke="#5e6163" stroke-width="1"/><path d="M2.5 4.5 H5.5" stroke="#7a7d80" stroke-width="1"/></svg>
<svg class="a" style="left:250.5px;top:204.60000000000002px;" width="8" height="9" viewBox="0 0 8 9"><path d="M0.5 8.5 H7.5 V3.5 L4 0 L0.5 3.5 Z" fill="#313335" stroke="#5e6163" stroke-width="1"/><path d="M2.5 4.5 H5.5" stroke="#7a7d80" stroke-width="1"/></svg>
<svg class="a" style="left:250.5px;top:236.60000000000002px;" width="8" height="9" viewBox="0 0 8 9"><path d="M0.5 0.5 H7.5 V5.5 L4 9 L0.5 5.5 Z" fill="#313335" stroke="#5e6163" stroke-width="1"/><path d="M2.5 4.5 H5.5" stroke="#7a7d80" stroke-width="1"/></svg>
<svg class="a" style="left:250.5px;top:268.6px;" width="8" height="9" viewBox="0 0 8 9"><path d="M0.5 8.5 H7.5 V3.5 L4 0 L0.5 3.5 Z" fill="#313335" stroke="#5e6163" stroke-width="1"/><path d="M2.5 4.5 H5.5" stroke="#7a7d80" stroke-width="1"/></svg>
<svg class="a" style="left:250.5px;top:300.6px;" width="8" height="9" viewBox="0 0 8 9"><path d="M0.5 0.5 H7.5 V5.5 L4 9 L0.5 5.5 Z" fill="#313335" stroke="#5e6163" stroke-width="1"/><path d="M2.5 4.5 H5.5" stroke="#7a7d80" stroke-width="1"/></svg>
<svg class="a" style="left:250.5px;top:332.6px;" width="8" height="9" viewBox="0 0 8 9"><path d="M0.5 8.5 H7.5 V3.5 L4 0 L0.5 3.5 Z" fill="#313335" stroke="#5e6163" stroke-width="1"/><path d="M2.5 4.5 H5.5" stroke="#7a7d80" stroke-width="1"/></svg>
<svg class="a" style="left:250.5px;top:348.6px;" width="8" height="9" viewBox="0 0 8 9"><path d="M0.5 0.5 H7.5 V5.5 L4 9 L0.5 5.5 Z" fill="#313335" stroke="#5e6163" stroke-width="1"/><path d="M2.5 4.5 H5.5" stroke="#7a7d80" stroke-width="1"/></svg>
<svg class="a" style="left:229px;top:107.6px;" width="12" height="10" viewBox="0 0 12 10"><circle cx="4.5" cy="5.5" r="4" fill="#499c54"/><text x="4.5" y="8" font-size="6.5" text-anchor="middle" fill="#1e3a20" font-family="Liberation Sans" font-weight="bold">O</text><path d="M9.5 9.5 V2.5" stroke="#c8833a" stroke-width="1.6"/><circle cx="9.5" cy="2" r="1.6" fill="#e05555"/></svg>
<svg class="a" style="left:229px;top:267.6px;" width="12" height="10" viewBox="0 0 12 10"><circle cx="4.5" cy="5.5" r="4" fill="#499c54"/><text x="4.5" y="8" font-size="6.5" text-anchor="middle" fill="#1e3a20" font-family="Liberation Sans" font-weight="bold">O</text><path d="M9.5 9.5 V2.5" stroke="#c8833a" stroke-width="1.6"/><circle cx="9.5" cy="2" r="1.6" fill="#e05555"/></svg>
<svg class="a" style="left:265px;top:168.5px;" width="10" height="13" viewBox="0 0 10 13"><circle cx="4.5" cy="4.8" r="4.3" fill="#f4c142"/><path d="M3 2.5 L6 4.8 L3 7" stroke="#c98a1a" stroke-width="0.9" fill="none"/><rect x="2.5" y="9.3" width="4.5" height="2.6" rx="1" fill="#9a9a9a"/></svg>
<div class="a" style="left:284px;top:-1px;width:1px;height:423px;background:#383838;"></div>
<div class="a" style="left:308px;top:-1px;width:1px;height:202px;background:#383838;"></div>
<div class="a" style="left:308px;top:249px;width:1px;height:173px;background:#383838;"></div>
<div class="a" style="left:331px;top:-1px;width:1px;height:186px;background:#383838;"></div>
<div class="a" style="left:331px;top:281px;width:1px;height:141px;background:#383838;"></div>
<div class="a" style="left:355px;top:-1px;width:1px;height:42px;background:#383838;"></div>
<div class="a" style="left:355px;top:89px;width:1px;height:64px;background:#383838;"></div>
<div class="a" style="left:355px;top:297px;width:1px;height:32px;background:#383838;"></div>
<div class="a" style="left:355px;top:361px;width:1px;height:61px;background:#383838;"></div>
<div class="a" style="left:378px;top:-1px;width:1px;height:26px;background:#383838;"></div>
<div class="m" style="left:399.44px;top:-6.1px"><span style="color:#a9b7c6;">})</span><span style="color:#cc7832;">;</span></div>
<div class="m" style="left:375.98px;top:25.9px"><span style="color:#a9b7c6;">}</span></div>
<div class="m" style="left:352.52px;top:41.9px"><span style="color:#a9b7c6;">})</span><span style="color:#cc7832;">;</span></div>
<div class="m" style="left:352.52px;top:73.9px"><span style="color:#a9b7c6;">dialog.setNegativeButton(</span><span style="display:inline-block;vertical-align:top;margin:0.5px 3px 0 2px;height:12.5px;width:23.5px;line-height:12.5px;padding-left:3.5px;background:#333333;border-radius:3px;font-family:Liberation Sans;font-size:9.2px;color:#808080">text:</span><span style="color:#6a8759;">&quot;NO&quot;</span><span style="color:#cc7832;">, </span><span style="color:#cc7832;">new </span><span style="color:#a9b7c6;">DialogInterface.OnClickListener() {</span></div>
<div class="m" style="left:375.98px;top:89.9px"><span style="color:#bbb529;">@Override</span></div>
<div class="m" style="left:375.98px;top:105.9px"><span style="color:#cc7832;">public void </span><span style="color:#ffc66d;">onClick</span><span style="color:#a9b7c6;">(DialogInterface dialog</span><span style="color:#cc7832;">, </span><span style="color:#cc7832;">int </span><span style="color:#a9b7c6;">which) {</span></div>
<div class="m" style="left:375.98px;top:137.9px"><span style="color:#a9b7c6;">}</span></div>
<div class="m" style="left:352.52px;top:153.9px"><span style="color:#a9b7c6;">})</span><span style="color:#cc7832;">;</span></div>
<div class="m" style="left:352.52px;top:169.9px"><span style="color:#a9b7c6;">dialog.show()</span><span style="color:#cc7832;">;</span></div>
<div class="m" style="left:329.07px;top:185.9px"><span style="color:#a9b7c6;">}</span></div>
<div class="m" style="left:305.61px;top:201.9px"><span style="color:#a9b7c6;">})</span><span style="color:#cc7832;">;</span></div>
<div class="m" style="left:305.61px;top:233.9px"><span style="color:#9876aa;">editChanges</span><span style="color:#a9b7c6;">.setOnClickListener(</span><span style="color:#cc7832;">new </span><span style="color:#a9b7c6;">View.OnClickListener() {</span></div>
<div class="m" style="left:329.07px;top:249.9px"><span style="color:#bbb529;">@Override</span></div>
<div class="m" style="left:329.07px;top:265.9px"><span style="color:#cc7832;">public void </span><span style="color:#ffc66d;">onClick</span><span style="color:#a9b7c6;">(View v) {</span></div>
<div class="m" style="left:352.52px;top:281.9px"><span style="color:#cc7832;">if </span><span style="color:#a9b7c6;">(</span><span style="color:#9876aa;">editName</span><span style="color:#a9b7c6;">.getText().toString().isEmpty() || </span><span style="color:#9876aa;">editEmail</span><span style="color:#a9b7c6;">.getText().toString().isEmpty()</span></div>
<div class="m" style="left:399.44px;top:297.9px"><span style="color:#a9b7c6;">|| </span><span style="color:#9876aa;">editPhone</span><span style="color:#a9b7c6;">.getText().toString().isEmpty()){</span></div>
<div class="m" style="left:375.98px;top:313.9px"><span style="color:#a9b7c6;">Toast.</span><span style="color:#a9b7c6;font-style:italic;">makeText</span><span style="color:#a9b7c6;">(</span><span style="display:inline-block;vertical-align:top;margin:0.5px 3px 0 2px;height:12.5px;width:38.5px;line-height:12.5px;padding-left:3.5px;background:#333333;border-radius:3px;font-family:Liberation Sans;font-size:9.2px;color:#808080">context:</span><span style="color:#a9b7c6;">contactInfo.</span><span style="color:#cc7832;">this</span><span style="color:#cc7832;">, </span><span style="display:inline-block;vertical-align:top;margin:0.5px 3px 0 2px;height:12.5px;width:24.5px;line-height:12.5px;padding-left:3.5px;background:#333333;border-radius:3px;font-family:Liberation Sans;font-size:9.2px;color:#808080">text:</span><span style="color:#6a8759;">&quot;Please enter all fields&quot;</span><span style="color:#a9b7c6;">, Toast.</span></div>
<div class="m" style="left:352.52px;top:329.9px"><span style="color:#a9b7c6;">}</span></div>
<div class="m" style="left:352.52px;top:345.9px"><span style="color:#cc7832;">else</span><span style="color:#a9b7c6;">{</span></div>
<div class="m" style="left:375.98px;top:377.9px"><span style="color:#a9b7c6;">Application_Class.</span><span style="color:#9876aa;font-style:italic;">contacts</span><span style="color:#a9b7c6;">.get(</span><span style="color:#9876aa;text-decoration:underline;text-underline-offset:1.5px;">pos</span><span style="color:#a9b7c6;">).setName(</span><span style="color:#9876aa;">editName</span><span style="color:#a9b7c6;">.getText().toString())</span><span style="color:#cc7832;">;</span></div>
<div class="m" style="left:375.98px;top:393.9px"><span style="color:#a9b7c6;">Application_Class.</span><span style="color:#9876aa;font-style:italic;">contacts</span><span style="color:#a9b7c6;">.get(</span><span style="color:#9876aa;text-decoration:underline;text-underline-offset:1.5px;">pos</span><span style="color:#a9b7c6;">).setPhone(</span><span style="color:#9876aa;">editPhone</span><span style="color:#a9b7c6;">.getText().toString())</span><span style="color:#cc7832;">;</span></div>
<div class="m" style="left:375.98px;top:409.9px"><span style="color:#a9b7c6;">Application_Class.</span><span style="color:#9876aa;font-style:italic;">contacts</span><span style="color:#a9b7c6;">.get(</span><span style="color:#9876aa;text-decoration:underline;text-underline-offset:1.5px;">pos</span><span style="color:#a9b7c6;">).setEmail(</span><span style="color:#9876aa;">editEmail</span><span style="color:#a9b7c6;">.getText().toString())</span><span style="color:#cc7832;">;</span></div>
<div class="a" style="left:258px;top:416px;width:524px;height:6px;background:rgba(140,140,140,0.35);border-radius:3px"></div>
<div class="a" style="left:997px;top:-1px;width:10px;height:423px;background:#2b2b2b;"></div>
<div class="a" style="left:997px;top:1px;width:8px;height:8px;background:#d4a72c;"></div>
<div class="a" style="left:997.5px;top:169px;width:1.5px;height:63px;background:#6a6a6a;"></div>
<div class="a" style="left:997px;top:214.5px;width:4px;height:1.5px;background:#c8902a;"></div>
<div class="a" style="left:997px;top:297px;width:6px;height:1.5px;background:#c8902a;"></div>
<div class="a" style="left:997px;top:311px;width:10px;height:2px;background:#c8902a;"></div>
<div class="a" style="left:997px;top:355px;width:10px;height:2px;background:#c8902a;"></div>
</div>
<div class="a" style="left:205px;top:490px;width:802px;height:19px;background:#3c3f41;"></div>
<div class="a" style="left:205px;top:490px;width:802px;height:1px;background:#323232;"></div>
<div class="t" style="left:261.5px;top:496.4px;font-size:9.4px;color:#bbbbbb;">contactInfo</div>
<div class="t" style="left:329.0px;top:496.4px;font-size:9.4px;color:#bbbbbb;">onCreate()</div>
<div class="t" style="left:391.6px;top:496.4px;font-size:9.4px;color:#bbbbbb;">new OnClickListener</div>
<div class="t" style="left:494.6px;top:496.4px;font-size:9.4px;color:#bbbbbb;">onClick()</div>
<svg class="a" style="left:319.0px;top:498.5px;" width="5" height="4.5" viewBox="0 0 5 4.5"><path d="M0.5 0 L4 2.25 L0.5 4.5" stroke="#6d6f71" stroke-width="0.9" fill="none"/></svg>
<svg class="a" style="left:381.5px;top:498.5px;" width="5" height="4.5" viewBox="0 0 5 4.5"><path d="M0.5 0 L4 2.25 L0.5 4.5" stroke="#6d6f71" stroke-width="0.9" fill="none"/></svg>
<svg class="a" style="left:485.0px;top:498.5px;" width="5" height="4.5" viewBox="0 0 5 4.5"><path d="M0.5 0 L4 2.25 L0.5 4.5" stroke="#6d6f71" stroke-width="0.9" fill="none"/></svg>
<div class="a" style="left:0px;top:509px;width:1024px;height:18px;background:#3c3f41;"></div>
<div class="a" style="left:0px;top:509px;width:1024px;height:1px;background:#323436;"></div>
<svg class="a" style="left:26px;top:515px;" width="8" height="8" viewBox="0 0 8 8"><path d="M0.5 0 L7 3.7 L0.5 7.4 Z" fill="#afb1b3"/></svg>
<div class="a" style="left:32.5px;top:521px;width:3.2px;height:3.2px;background:#1fd31f;border-radius:50%"></div>
<div class="t" style="left:38.6px;top:515.8px;font-size:9.1px;color:#bbbbbb;"><u>4</u>: Run</div>
<svg class="a" style="left:81px;top:515px;" width="9" height="8" viewBox="0 0 9 8"><rect x="0" y="0" width="1.6" height="1.6" fill="#afb1b3"/><rect x="0" y="3" width="1.6" height="1.6" fill="#afb1b3"/><rect x="0" y="6" width="1.6" height="1.6" fill="#afb1b3"/><rect x="3" y="0" width="6" height="1.6" fill="#afb1b3"/><rect x="3" y="3" width="6" height="1.6" fill="#afb1b3"/><rect x="3" y="6" width="6" height="1.6" fill="#afb1b3"/></svg>
<div class="t" style="left:94.0px;top:515.8px;font-size:9.1px;color:#bbbbbb;">TODO</div>
<svg class="a" style="left:133px;top:514px;" width="11" height="11" viewBox="0 0 11 11"><path d="M0.5 3 L4 0 L7 3 L5 5 Z" fill="#afb1b3"/><path d="M4.5 4 L10.5 10" stroke="#afb1b3" stroke-width="2"/></svg>
<div class="t" style="left:147.3px;top:515.8px;font-size:9.1px;color:#bbbbbb;">Build</div>
<svg class="a" style="left:182.5px;top:515px;" width="11" height="8" viewBox="0 0 11 8"><path d="M1 7.5 A4.5 4.5 0 0 1 10 7.5" fill="none" stroke="#afb1b3" stroke-width="2"/><path d="M5.5 7.5 L8 3" stroke="#afb1b3" stroke-width="1.5"/></svg>
<div class="t" style="left:197.0px;top:515.8px;font-size:9.1px;color:#bbbbbb;">Profiler</div>
<svg class="a" style="left:242.5px;top:515px;" width="9" height="8" viewBox="0 0 9 8"><rect x="0" y="0" width="8" height="1.6" fill="#afb1b3"/><rect x="0" y="3" width="5" height="1.6" fill="#afb1b3"/><rect x="0" y="6" width="8" height="1.6" fill="#afb1b3"/></svg>
<div class="t" style="left:255.2px;top:515.8px;font-size:9.1px;color:#bbbbbb;"><u>6</u>: Logcat</div>
<svg class="a" style="left:309.5px;top:514px;" width="9" height="9" viewBox="0 0 9 9"><rect x="0.5" y="0.5" width="8" height="8" fill="#afb1b3"/><path d="M2 2.5 L4 4.5 L2 6.5" stroke="#3c3f41" fill="none" stroke-width="1"/></svg>
<div class="t" style="left:322.4px;top:515.8px;font-size:9.1px;color:#bbbbbb;">Terminal</div>
<div class="t" style="left:927.0px;top:515.8px;font-size:9.1px;color:#bbbbbb;">Layout Inspector</div>
<div class="a" style="left:0px;top:527px;width:1024px;height:17px;background:#3c3f41;"></div>
<div class="a" style="left:0px;top:527px;width:1024px;height:1px;background:#323436;"></div>
<div class="a" style="left:0px;top:542.5px;width:1024px;height:1.5px;background:#1f1f1f;"></div>
<svg class="a" style="left:4px;top:531px;" width="11" height="10" viewBox="0 0 11 10"><rect x="2.5" y="0.5" width="8" height="7" fill="none" stroke="#8e9092"/><rect x="0.5" y="2.5" width="8" height="7" fill="#3c3f41" stroke="#8e9092"/></svg>
<div class="t" style="left:22.0px;top:531.0px;font-size:9.4px;color:#bbbbbb;">Install successfully finished in 1 s 92 ms. (a minute ago)</div>
<div class="t" style="left:838.7px;top:531.0px;font-size:9.4px;color:#bbbbbb;">155:31</div>
<div class="t" style="left:877.0px;top:531.0px;font-size:9.4px;color:#bbbbbb;">CRLF</div>
<div class="t" style="left:907.5px;top:531.0px;font-size:9.4px;color:#bbbbbb;">UTF-8</div>
<div class="t" style="left:942.0px;top:531.0px;font-size:9.4px;color:#bbbbbb;">4 spaces</div>
<svg class="a" style="left:986px;top:531px;" width="10" height="10" viewBox="0 0 10 10"><path d="M1.5 4.5 V2.5 A2.5 2.5 0 0 1 6.5 2.5" fill="none" stroke="#afb1b3" stroke-width="1.4"/><rect x="3" y="4.5" width="7" height="5.5" fill="#afb1b3"/></svg>
<svg class="a" style="left:1006px;top:530px;" width="10" height="11" viewBox="0 0 10 11"><path d="M2 3 H8 L7 0.5 H3 Z" fill="#afb1b3"/><rect x="1" y="3" width="8" height="1.3" fill="#afb1b3"/><circle cx="5" cy="6" r="2.2" fill="#afb1b3"/><path d="M0.5 11 Q5 6.5 9.5 11 Z" fill="#afb1b3"/></svg>
<div class="a" style="left:13.3px;top:484.8px;width:187.3px;height:25.6px;background:#3a4a35;border:1px solid #5a7a4e;border-radius:4px"></div>
<svg class="a" style="left:37px;top:509.4px;" width="14" height="8" viewBox="0 0 14 8"><path d="M0 0 L7 7.5 L13 0 Z" fill="#3a4a35"/><path d="M0 0 L7 7.5 L13 0" fill="none" stroke="#5a7a4e" stroke-width="1"/></svg>
<div class="t" style="left:23.5px;top:493.0px;font-size:9.45px;color:#bbbbbb;">Install successfully finished in 1 s 92 ms.</div>
<div class="a" style="left:0px;top:544px;width:1024px;height:32px;background:#3f3f3f;"></div>
<svg class="a" style="left:13px;top:553.5px;" width="13.5" height="13.5" viewBox="0 0 13.5 13.5"><path d="M0 1.8 L5.6 1 V6.1 H0 Z M6.3 0.9 L13 0 V6.1 H6.3 Z M0 6.9 H5.6 V12 L0 11.2 Z M6.3 6.9 H13 V13 L6.3 12.1 Z" fill="#ffffff"/></svg>
<div class="a" style="left:39px;top:544px;width:275px;height:32px;background:#2f2f2f;border:1.5px solid #545454;border-bottom:none"></div>
<svg class="a" style="left:47px;top:553px;" width="14" height="14" viewBox="0 0 14 14"><circle cx="8.5" cy="5.5" r="4.3" fill="none" stroke="#e8e8e8" stroke-width="1.3"/><path d="M5.5 8.5 L1 13" stroke="#e8e8e8" stroke-width="1.4"/></svg>
<div class="t" style="left:71.0px;top:554.8px;font-size:11.8px;color:#e4e4e4;">Type here to search</div>
<svg class="a" style="left:326px;top:553px;" width="14" height="14" viewBox="0 0 14 14"><circle cx="7" cy="7" r="5.3" fill="none" stroke="#ffffff" stroke-width="1.7"/></svg>
<svg class="a" style="left:362px;top:552px;" width="16" height="15" viewBox="0 0 16 15"><rect x="3" y="2" width="9" height="11" fill="none" stroke="#e0e0e0" stroke-width="1.2"/><path d="M0.5 1 V14 M14.5 1 V14" stroke="#e0e0e0" stroke-width="1.2"/><path d="M5 5 H10 M5 7.5 H10" stroke="#e0e0e0"/></svg>
<svg class="a" style="left:404px;top:551px;" width="16" height="16" viewBox="0 0 16 16"><circle cx="8" cy="8" r="7.5" fill="#3ddc84"/><circle cx="8" cy="6" r="2.4" fill="#1b4a60"/><path d="M7 7 L4 14 M9 7 L12 14 M4.5 11 H11.5" stroke="#ffffff" stroke-width="1.3"/></svg>
<div class="a" style="left:396px;top:574px;width:33px;height:2px;background:#76b9ed;"></div>
<svg class="a" style="left:444px;top:551px;" width="16" height="16" viewBox="0 0 16 16"><circle cx="8" cy="8" r="7.8" fill="#db4437"/><path d="M8 8 L1.2 4.1 A7.8 7.8 0 0 0 8 15.8 Z" fill="#0f9d58"/><path d="M8 8 L14.8 4.1 A7.8 7.8 0 0 1 8 15.8 Z" fill="#ffcd40"/><circle cx="8" cy="8" r="3.6" fill="#ffffff"/><circle cx="8" cy="8" r="2.7" fill="#4285f4"/></svg>
<div class="a" style="left:436px;top:574px;width:33px;height:2px;background:#76b9ed;"></div>
<svg class="a" style="left:483px;top:551px;" width="19" height="17" viewBox="0 0 19 17"><path d="M4 0 L18 3 V12 L4 9 Z" fill="#4fc3f7"/><path d="M0 14 L9 12 L14 14 L5 16.5 Z" fill="#e0e0e0"/></svg>
<svg class="a" style="left:524px;top:551px;" width="16" height="16" viewBox="0 0 16 16"><circle cx="8" cy="8" r="7.8" fill="#0f5ca8"/><path d="M1 6 Q3 0.5 8.5 0.3 Q14.5 0.5 15.7 6.5 Q15.5 10 12 10 Q9 10 9 8 Q9 5 6 5 Q3 5 1 6 Z" fill="#38c0b0"/><path d="M4 9 Q5 14 11 14.5 Q13.5 14.5 15 12.5 Q12 15.8 8 15.8 Q2 15.5 1 9 Q1.5 6.5 4 6.5 Z" fill="#1e90e0"/></svg>
<div class="a" style="left:553px;top:544px;width:39px;height:32px;background:#595959;"></div>
<svg class="a" style="left:562.5px;top:553.5px;" width="18.5" height="12" viewBox="0 0 18.5 12"><rect x="0" y="0" width="18.5" height="12" rx="1.5" fill="#3ddc84"/><rect x="6" y="0.8" width="6.5" height="10.4" rx="1" fill="#1b3a4a"/><rect x="7" y="2" width="4.5" height="7.5" fill="#cfd8dc"/></svg>
<div class="a" style="left:553px;top:574px;width:39px;height:2px;background:#76b9ed;"></div>
<svg class="a" style="left:820px;top:556px;" width="10" height="6" viewBox="0 0 10 6"><path d="M0.5 5.5 L5 1 L9.5 5.5" fill="none" stroke="#ffffff" stroke-width="1.2"/></svg>
<svg class="a" style="left:837px;top:554px;" width="15" height="9" viewBox="0 0 15 9"><path d="M2 9 A2.5 2.5 0 0 1 2.5 4.5 A4 4 0 0 1 10 3.5 A3 3 0 0 1 14.5 7 A2 2 0 0 1 13 9 Z" fill="#e8e8e8"/></svg>
<svg class="a" style="left:858px;top:553px;" width="11" height="11" viewBox="0 0 11 11"><path d="M1 10 A9 9 0 0 1 10 1 M3.5 10 A6.5 6.5 0 0 1 10 3.5 M6 10 A4 4 0 0 1 10 6" fill="none" stroke="#a8a8a8" stroke-width="1"/><circle cx="9.5" cy="9.5" r="1" fill="#e8e8e8"/></svg>
<svg class="a" style="left:876px;top:553px;" width="13" height="12" viewBox="0 0 13 12"><path d="M0.5 4 H3 L6.5 1 V11 L3 8 H0.5 Z" fill="none" stroke="#e8e8e8" stroke-width="1"/><path d="M8.5 4 Q9.8 6 8.5 8 M10.5 2.5 Q12.8 6 10.5 9.5" fill="none" stroke="#e8e8e8" stroke-width="1"/></svg>
<div class="t" style="left:897.0px;top:555.8px;font-size:9.6px;color:#ffffff;">ENG</div>
<div class="t" style="left:940.0px;top:547.5px;font-size:9.6px;color:#ffffff;">17:41</div>
<div class="t" style="left:927.5px;top:563.1px;font-size:9.6px;color:#ffffff;">18-07-2020</div>
<svg class="a" style="left:994px;top:551px;" width="17" height="18" viewBox="0 0 17 18"><path d="M0.5 0.5 H14.5 V10.5 H6 L3 13 V10.5 H0.5 Z" fill="#ffffff"/><path d="M3 3.5 H12 M3 6 H12 M3 8.5 H9" stroke="#3f3f3f" stroke-width="1"/><circle cx="10.5" cy="12.5" r="5" fill="#3f3f3f" stroke="#ffffff" stroke-width="1"/><text x="10.5" y="15.8" font-size="8" text-anchor="middle" fill="#ffffff" font-family="Liberation Sans">2</text></svg>
<div class="a" style="left:1007px;top:47px;width:17px;height:462px;background:#3c3f41;"></div>
<div class="a" style="left:1007px;top:47px;width:1px;height:462px;background:#323436;"></div>
<svg class="a" style="left:1009px;top:52px;" width="14" height="10" viewBox="0 0 14 10"><path d="M1 9 Q0 3 6 3 L9 2 L12 4 L13 7 H11 V9 H9 V7 H5 V9 Z" fill="#afb1b3"/></svg>
<svg class="a" style="left:1010px;top:67px;" width="10" height="9" viewBox="0 0 10 9"><circle cx="5" cy="5" r="3.5" fill="none" stroke="#afb1b3" stroke-width="1.2"/></svg>
<svg class="a" style="left:1013px;top:407px;" width="8" height="11" viewBox="0 0 8 11"><rect x="0.6" y="0.6" width="6.8" height="9.8" rx="1" fill="none" stroke="#afb1b3" stroke-width="1.2"/><rect x="2.5" y="8" width="3" height="1" fill="#afb1b3"/></svg>
<div class="t" style="left:1015.6px;top:456px;font-size:8px;color:#bbbbbb;transform:translate(-50%,-50%) rotate(90deg)">Device File Explorer</div>
<div class="a" style="left:845px;top:67px;width:1px;height:8px;background:#5a5a5a;"></div>
<div class="a" style="left:782px;top:74px;width:214px;height:459px;border-radius:26px;background:#1c1c1c;border-top:1.5px solid #363636;box-shadow:0 0 2px rgba(0,0,0,0.5)"></div>
<div class="a" style="left:784.6px;top:76.6px;width:208.8px;height:453.8px;border-radius:23.5px;border:1px solid #8a8a8a;border-top-color:#3e3e3e;background:#262626"></div>
<div class="a" style="left:786.5px;top:78.5px;width:205px;height:450px;border-radius:22px;border:1.8px solid #4e4e4e;border-top-color:#2e2e2e;background:#0b0b0b"></div>
<svg class="a" style="left:815px;top:89px;" width="40" height="14" viewBox="0 0 40 14"><circle cx="6.5" cy="6.5" r="5" fill="#1e1e1e" stroke="#2c2c2c"/><circle cx="33" cy="6.5" r="5" fill="#1e1e1e" stroke="#2c2c2c"/><circle cx="6.5" cy="6.5" r="1.3" fill="#3a3a3a"/><circle cx="33" cy="6.5" r="1.3" fill="#3a3a3a"/></svg>
<div class="a" style="left:865px;top:88px;width:49px;height:4px;background:#242424;border-radius:2px"></div>
<div class="a" style="left:920px;top:93px;width:7px;height:7px;background:#000000;border-radius:50%"></div>
<div class="a" style="left:791px;top:109px;width:197px;height:394px;border-radius:9px 9px 11px 11px;overflow:hidden;background:#000000"><div class="a" style="left:0;top:0;width:197px;height:11px;background:#3700b3"></div><div class="a" style="left:0;top:11px;width:197px;height:28.6px;background:#6200ee"></div><div class="a" style="left:0;top:39.6px;width:197px;height:330.4px;background:#fafafa"></div></div>
<div class="t" style="left:794.7px;top:111.6px;font-size:7px;color:#ffffff;">5:41</div>
<div class="t" style="left:959.5px;top:111.9px;font-size:6.4px;color:#ffffff;">LTE</div>
<div class="a" style="left:980.5px;top:111px;width:4px;height:7.5px;background:#ffffff;border-radius:0.5px"></div>
<div class="a" style="left:981.5px;top:110.2px;width:2px;height:1px;background:#ffffff;"></div>
<div class="t" style="left:798.6px;top:131.0px;font-size:10.2px;color:#ffffff;font-weight:bold;letter-spacing:-0.25px;">Contact</div>
<div class="t" style="left:879.0px;top:195.8px;font-size:29px;color:#757575;font-weight:bold;font-style:italic;">A</div>
<div class="t" style="left:864.0px;top:236.7px;font-size:18.6px;color:#757575;">Ansari</div>
<svg class="a" style="left:801.7px;top:271.4px;" width="27.5" height="26.5" viewBox="0 0 27.5 26.5"><svg viewBox="3 3 18 18" width="27.5" height="26.5" preserveAspectRatio="none"><path d="M6.62 10.79c1.44 2.830 3.76 5.14 6.59 6.59l2.2-2.2c.27-.27.67-.36 1.02-.24 1.12.37 2.33.57 3.57.57.55 0 1 .45 1 1V20c0 .55-.45 1-1 1-9.39 0-17-7.61-17-17 0-.55.45-1 1-1h3.5c.55 0 1 .45 1 1 0 1.25.2 2.45.57 3.570.11.35.03.74-.25 1.02l-2.2 2.2z" fill="#10e54a"/></svg></svg>
<svg class="a" style="left:849.8px;top:272.5px;" width="30" height="24.5" viewBox="0 0 30 24.5"><svg viewBox="2 4 20 16" width="30" height="24.5" preserveAspectRatio="none"><path d="M20 4H4c-1.1 0-1.99.9-1.99 2L2 18c0 1.1.9 2 2 2h16c1.1 0 2-.9 2-2V6c0-1.1-.9-2-2-2zm0 4l-8 5-8-5V6l8 5 8-5v2z" fill="#2f2ff5"/></svg></svg>
<svg class="a" style="left:900.6px;top:271.4px;" width="27" height="26.5" viewBox="0 0 27 26.5"><svg viewBox="3 3 18 18" width="27" height="26.5" preserveAspectRatio="none"><path d="M3 17.25V21h3.75L17.81 9.94l-3.75-3.75L3 17.25zM20.710 7.04c.39-.39.39-1.02 0-1.41l-2.34-2.34c-.39-.39-1.02-.39-1.41 0l-1.83 1.83 3.75 3.75 1.83-1.83z" fill="#ffeb3b"/></svg></svg>
<svg class="a" style="left:953px;top:271.4px;" width="21" height="26.5" viewBox="0 0 21 26.5"><svg viewBox="5 3 14 18" width="21" height="26.5" preserveAspectRatio="none"><path d="M6 19c0 1.1.9 2 2 2h8c1.1 0 2-.9 2-2V7H6v12zM19 4h-3.5l-1-1h-5l-1 1H5v2h14V4z" fill="#ff3d00"/></svg></svg>
<div class="t" style="left:808.2px;top:317.7px;font-size:9px;color:#212121;">Aravind</div>
<div class="a" style="left:808px;top:327.8px;width:163px;height:1.6px;background:#03dac5;"></div>
<div class="t" style="left:808.2px;top:347.8px;font-size:9px;color:#212121;">ansari@gmail.com</div>
<div class="a" style="left:808px;top:357.8px;width:163px;height:1px;background:#7b7b7b;"></div>
<div class="t" style="left:808.2px;top:377.7px;font-size:9px;color:#212121;">98333423443</div>
<div class="a" style="left:808px;top:388px;width:163px;height:1px;background:#7b7b7b;"></div>
<div class="a" style="left:821px;top:400px;width:137px;height:24.4px;background:#3700b3;border-radius:3px;box-shadow:0 1px 1.5px rgba(0,0,0,0.3)"></div>
<div class="t" style="left:881.5px;top:410.0px;font-size:7px;color:#ffffff;font-weight:bold;">EDIT</div>
<svg class="a" style="left:828px;top:487px;" width="8" height="8.5" viewBox="0 0 8 8.5"><path d="M7.6 0 V8.5 L0 4.25 Z" fill="#e0e0e0"/></svg>
<div class="a" style="left:885.8px;top:487.5px;width:7px;height:7px;background:#e0e0e0;border-radius:50%"></div>
<div class="a" style="left:942.3px;top:487.3px;width:7.6px;height:7.6px;background:#e0e0e0;"></div>
<div class="a" style="left:865px;top:517px;width:49px;height:3.5px;background:#262626;border-radius:2px"></div>
<div class="a" style="left:1000px;top:73px;width:24px;height:297px;background:#f7f7f7;border-left:1px solid #d8d8d8;border-top:1px solid #d8d8d8"></div>
<div class="a" style="left:1007px;top:84px;width:6px;height:1px;background:#9aa6ac;"></div>
<svg class="a" style="left:1012px;top:99px;" width="12" height="12" viewBox="0 0 12 12"><path d="M3 3 A4.8 4.8 0 1 0 10 3" fill="none" stroke="#5f7b8a" stroke-width="1.6"/><path d="M6.5 0 V6" stroke="#5f7b8a" stroke-width="1.6"/></svg>
<svg class="a" style="left:1012px;top:125px;" width="12" height="11" viewBox="0 0 12 11"><path d="M0 3.5 H3 L7 0 V11 L3 7.5 H0 Z" fill="#5f7b8a"/><path d="M9 3 Q11 5.5 9 8 M10.5 1 Q13.5 5.5 10.5 10" fill="none" stroke="#5f7b8a" stroke-width="1.2"/></svg>
<svg class="a" style="left:1012px;top:151px;" width="12" height="11" viewBox="0 0 12 11"><path d="M1 3.5 H4 L8 0 V11 L4 7.5 H1 Z" fill="#5f7b8a"/><path d="M10 3.5 Q11.5 5.5 10 7.5" fill="none" stroke="#5f7b8a" stroke-width="1.2"/></svg>
<svg class="a" style="left:1011px;top:173px;" width="13" height="14" viewBox="0 0 13 14"><rect x="2" y="2" width="9" height="10" rx="1" transform="rotate(-45 6.5 7)" fill="none" stroke="#5f7b8a" stroke-width="1.5"/></svg>
<svg class="a" style="left:1011px;top:198px;" width="13" height="14" viewBox="0 0 13 14"><rect x="2" y="2" width="9" height="10" rx="1" transform="rotate(45 6.5 7)" fill="none" stroke="#5f7b8a" stroke-width="1.5"/></svg>
<svg class="a" style="left:1012px;top:224px;" width="12" height="11" viewBox="0 0 12 11"><rect x="0" y="2" width="12" height="9" rx="1" fill="#5f7b8a"/><rect x="3.5" y="0" width="5" height="3" fill="#5f7b8a"/><circle cx="6" cy="6.5" r="2.3" fill="#f7f7f7"/></svg>
<svg class="a" style="left:1012px;top:248px;" width="12" height="12" viewBox="0 0 12 12"><circle cx="5" cy="5" r="3.8" fill="none" stroke="#5f7b8a" stroke-width="1.5"/><path d="M8 8 L11.5 11.5" stroke="#5f7b8a" stroke-width="1.8"/><path d="M3.2 5 H6.8 M5 3.2 V6.8" stroke="#5f7b8a" stroke-width="1"/></svg>
<svg class="a" style="left:1014px;top:276px;" width="8" height="10" viewBox="0 0 8 10"><path d="M7 0.7 V9.3 L0.8 5 Z" fill="none" stroke="#5f7b8a" stroke-width="1.2"/></svg>
<svg class="a" style="left:1013px;top:301px;" width="10" height="10" viewBox="0 0 10 10"><circle cx="5" cy="5" r="4" fill="none" stroke="#5f7b8a" stroke-width="1.2"/></svg>
<svg class="a" style="left:1013px;top:326px;" width="10" height="10" viewBox="0 0 10 10"><rect x="0.8" y="0.8" width="8" height="8" fill="none" stroke="#5f7b8a" stroke-width="1.2"/></svg>
<svg class="a" style="left:1012px;top:355px;" width="12" height="3" viewBox="0 0 12 3"><circle cx="1.5" cy="1.5" r="1.1" fill="#5f7b8a"/><circle cx="5.5" cy="1.5" r="1.1" fill="#5f7b8a"/><circle cx="9.5" cy="1.5" r="1.1" fill="#5f7b8a"/></svg>
</body></html>
